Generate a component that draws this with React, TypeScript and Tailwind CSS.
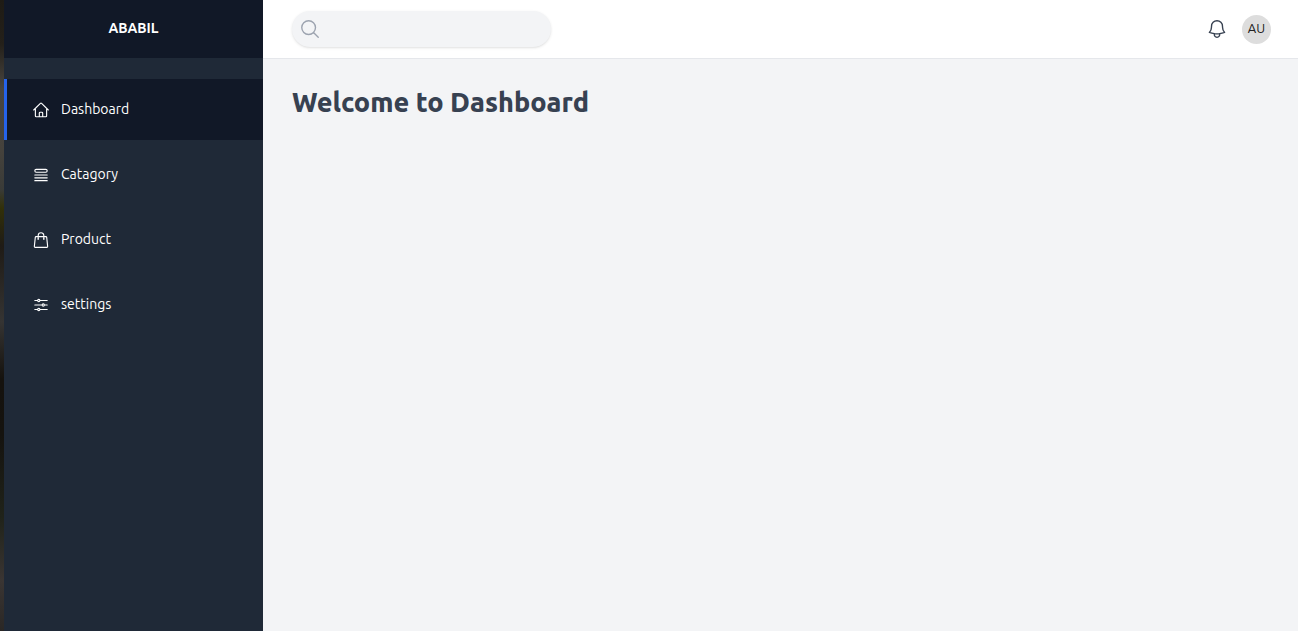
import React from "react";
import {
  HiOutlineAdjustmentsHorizontal,
  HiOutlineBell,
  HiOutlineHome,
  HiOutlineMagnifyingGlass,
  HiOutlineQueueList,
  HiOutlineShoppingBag,
} from "react-icons/hi2";
import type { IconType } from "react-icons";

type NavItem = { label: string; icon: IconType; active?: boolean };

const navItems: NavItem[] = [
  { label: "Dashboard", icon: HiOutlineHome, active: true },
  { label: "Catagory", icon: HiOutlineQueueList },
  { label: "Product", icon: HiOutlineShoppingBag },
  { label: "settings", icon: HiOutlineAdjustmentsHorizontal },
];

function Sidebar() {
  return (
    <aside className="w-[259px] shrink-0 bg-[#1f2937] text-white">
      <div className="flex h-[58px] items-center justify-center bg-[#111827] pb-0.5 text-sm font-bold">
        ABABIL
      </div>
      <nav className="mt-[21px] flex flex-col gap-1">
        {navItems.map(({ label, icon: Icon, active }) => (
          <a
            key={label}
            href="#"
            aria-current={active ? "page" : undefined}
            className={
              active
                ? "flex h-[61px] items-center gap-[11px] border-l-3 border-[#2563eb] bg-[#111827] pl-[25px]"
                : "flex h-[61px] items-center gap-[11px] border-l-3 border-transparent pl-[25px]"
            }
          >
            <Icon className="size-[18px]" aria-hidden="true" />
            <span className="pb-0.5 text-sm">{label}</span>
          </a>
        ))}
      </nav>
    </aside>
  );
}

function Header() {
  return (
    <header className="flex h-[59px] items-center justify-between border-b border-[#e5e7eb] bg-white pr-[27px] pl-[29px]">
      <label className="flex h-9 w-[259px] items-center gap-2 rounded-full bg-[#f3f4f6] px-[7px] shadow-sm">
        <HiOutlineMagnifyingGlass className="size-[22px] shrink-0 text-[#9ca3af]" aria-hidden="true" />
        <input type="search" aria-label="Search" className="min-w-0 flex-1 bg-transparent text-sm outline-none" />
      </label>
      <div className="flex items-center gap-[14px]">
        <button type="button" aria-label="Notifications" className="text-[#374151]">
          <HiOutlineBell className="size-[22px]" aria-hidden="true" />
        </button>
        <button
          type="button"
          className="flex size-[29px] items-center justify-center rounded-full bg-[#dddddd] text-[13px] text-[#222222]"
        >
          AU
        </button>
      </div>
    </header>
  );
}

export default function App() {
  return (
    <div className="flex min-h-screen bg-[#f3f4f6] font-['Ubuntu','Noto_Sans',sans-serif]">
      <div className="w-1 shrink-0 bg-[linear-gradient(to_bottom,#1e1b15_0%,#24201a_7%,#484540_14%,#45423c_24%,#3a3b38_30%,#323008_33%,#1f1b16_39%,#353433_51%,#15120e_60%,#15130f_69%,#20231a_82%,#3a3533_92%,#2a2725_100%)]" />
      <Sidebar />
      <div className="min-w-0 flex-1">
        <Header />
        <main className="px-[29px] py-[25px]">
          <h1 className="text-[27px] leading-9 font-extrabold text-[#374151]">Welcome to Dashboard</h1>
        </main>
      </div>
    </div>
  );
}
